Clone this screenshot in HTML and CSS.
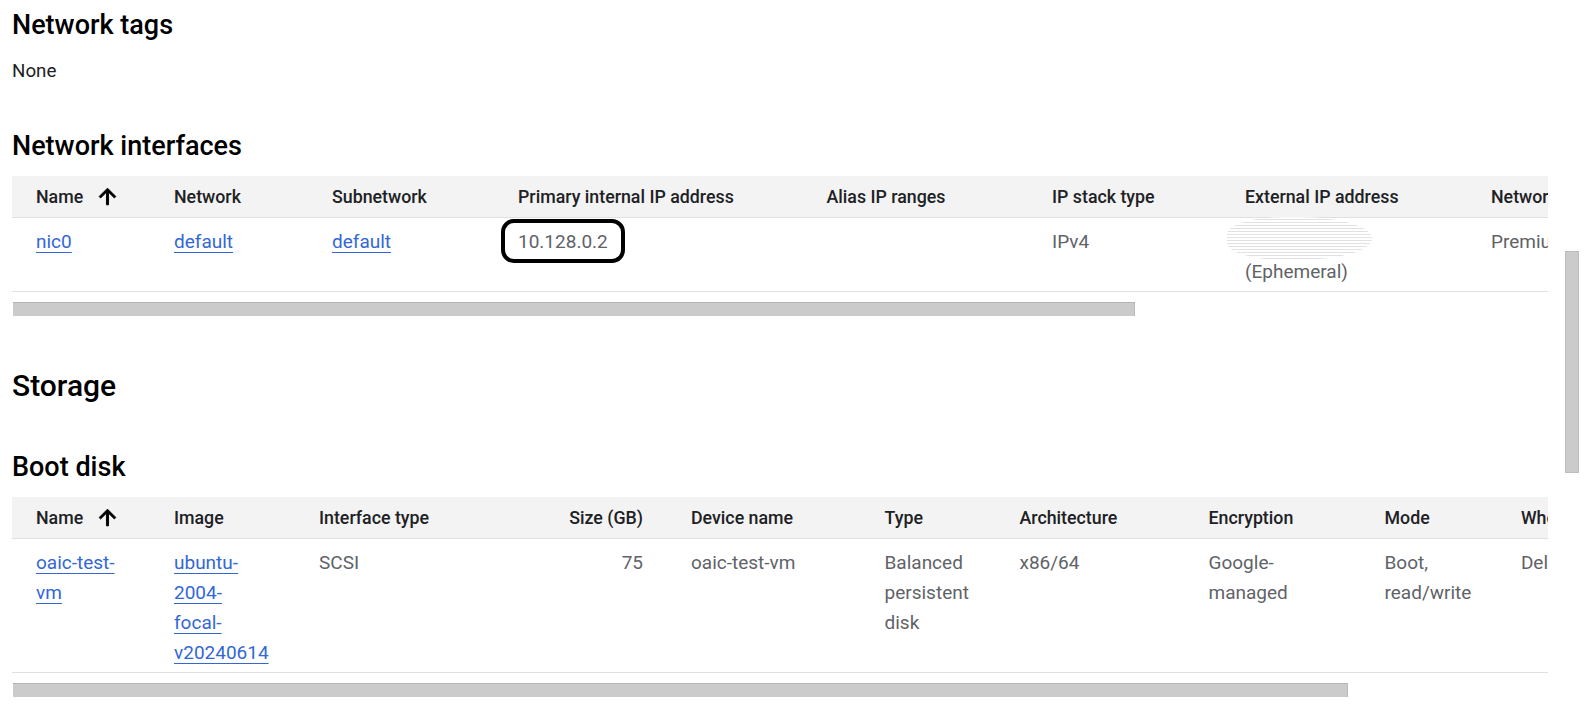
FILE: index.html
```html
<!DOCTYPE html>
<html lang="en">
<head>
<meta charset="utf-8">
<title>VM details</title>
<link rel="stylesheet" href="styles.css">
</head>
<body>
<main class="page">
  <h2 class="sub-title first">Network tags</h2>
  <p class="plain">None</p>

  <h2 class="sub-title gap-lg">Network interfaces</h2>
  <div class="table-wrap">
    <div class="table nic">
      <div class="row head">
        <div class="cell c1"><span>Name</span>
          <svg class="sort" viewBox="0 0 24 24"><path d="M4 12l1.41 1.41L11 7.83V20h2V7.83l5.58 5.59L20 12l-8-8-8 8z"/></svg>
        </div>
        <div class="cell">Network</div>
        <div class="cell">Subnetwork</div>
        <div class="cell">Primary internal IP address</div>
        <div class="cell">Alias IP ranges</div>
        <div class="cell">IP stack type</div>
        <div class="cell">External IP address</div>
        <div class="cell">Network tier</div>
      </div>
      <div class="row body">
        <div class="cell c1"><a href="#">nic0</a></div>
        <div class="cell"><a href="#">default</a></div>
        <div class="cell"><a href="#">default</a></div>
        <div class="cell"><span class="ip">10.128.0.2</span></div>
        <div class="cell"></div>
        <div class="cell">IPv4</div>
        <div class="cell"><div class="redact"></div>(Ephemeral)</div>
        <div class="cell">Premium</div>
      </div>
    </div>
  </div>
  <div class="hscroll"><div class="thumb t1"></div></div>

  <h2 class="title">Storage</h2>

  <h2 class="sub-title gap-md">Boot disk</h2>
  <div class="table-wrap">
    <div class="table disk">
      <div class="row head">
        <div class="cell c1"><span>Name</span>
          <svg class="sort" viewBox="0 0 24 24"><path d="M4 12l1.41 1.41L11 7.83V20h2V7.83l5.58 5.59L20 12l-8-8-8 8z"/></svg>
        </div>
        <div class="cell">Image</div>
        <div class="cell">Interface type</div>
        <div class="cell num">Size (GB)</div>
        <div class="cell">Device name</div>
        <div class="cell">Type</div>
        <div class="cell">Architecture</div>
        <div class="cell">Encryption</div>
        <div class="cell">Mode</div>
        <div class="cell">When deleting instance</div>
      </div>
      <div class="row body">
        <div class="cell c1"><a href="#">oaic-test-<br>vm</a></div>
        <div class="cell"><a href="#">ubuntu-<br>2004-<br>focal-<br>v20240614</a></div>
        <div class="cell">SCSI</div>
        <div class="cell num">75</div>
        <div class="cell">oaic-test-vm</div>
        <div class="cell">Balanced<br>persistent<br>disk</div>
        <div class="cell">x86/64</div>
        <div class="cell">Google-<br>managed</div>
        <div class="cell">Boot,<br>read/write</div>
        <div class="cell">Delete disk</div>
      </div>
    </div>
  </div>
  <div class="hscroll"><div class="thumb t2"></div></div>
</main>
<div class="vscroll"></div>
</body>
</html>
```

FILE: styles.css
```css
html, body {
  margin: 0;
  padding: 0;
  background: #ffffff;
  overflow: hidden;
}

body {
  font-family: Roboto, "Liberation Sans", Arial, sans-serif;
  color: #202124;
  width: 1594px;
  height: 705px;
  position: relative;
}

.page {
  padding: 9px 0 0 12px;
  width: 1536px;
}

.sub-title {
  margin: 0;
  font-size: 27px;
  line-height: 32px;
  font-weight: 500;
  color: #000000;
}

.title {
  margin: 52px 0 0 0;
  font-size: 30px;
  line-height: 36px;
  font-weight: 500;
  color: #000000;
}

.gap-lg { margin-top: 47px; }
.gap-md { margin-top: 47px; }

.plain {
  margin: 18px 0 0 0;
  font-size: 18.75px;
  line-height: 24px;
  color: #202124;
}

.table-wrap {
  margin-top: 14px;
  width: 1536px;
  overflow: hidden;
}

.table {
  width: 1800px;
}

.row {
  display: grid;
  border-bottom: 1px solid #e0e0e0;
}

.nic .row {
  grid-template-columns: 142px 158px 186px 308.5px 225.5px 193px 246px 240px;
}

.disk .row {
  grid-template-columns: 142px 145px 181px 191px 193.5px 135px 189px 176px 136.4px 260px;
}

.row.head {
  height: 41px;
  background: #f3f3f3;
  font-size: 17.8px;
  font-weight: 500;
  color: #202124;
  align-items: center;
}

.row.body {
  padding: 9px 0 4px 0;
  font-size: 19px;
  line-height: 30px;
  color: #5f6368;
  align-items: start;
}

.cell {
  padding: 0 20px;
  white-space: nowrap;
}

.cell.c1 {
  padding-left: 24px;
  display: flex;
  align-items: center;
}

.row.body .cell.c1 { display: block; }

.cell.num {
  text-align: right;
  padding-right: 28px;
}

.sort {
  width: 25px;
  height: 25px;
  margin-left: 12px;
  fill: #000000;
  stroke: #000000;
  stroke-width: 0.9;
  stroke-linejoin: miter;
}

a {
  color: #3367d6;
  text-decoration: underline;
  text-decoration-thickness: 1px;
  text-underline-offset: 4px;
}

.ip {
  position: relative;
  display: inline-block;
}

.ip::after {
  content: "";
  position: absolute;
  left: -17px;
  right: -17px;
  top: -8px;
  bottom: -6px;
  border: 4px solid #000000;
  border-radius: 13px;
}

.redact {
  position: relative;
  height: 30px;
}

.redact::before {
  content: "";
  position: absolute;
  left: -18px;
  width: 145px;
  top: -10px;
  bottom: -3px;
  border-radius: 40% 50% 50% 40%;
  background: repeating-linear-gradient(180deg, #ffffff 0px, #ffffff 2px, #dedede 2px, #dedede 3px);
  opacity: 0.9;
}

.hscroll {
  margin-top: 10px;
  height: 14px;
  width: 1536px;
}

.thumb {
  margin-left: 1px;
  background: #cbcbcb;
  border-top: 1px solid #b4b4b4;
  border-right: 1px solid #b9b9b9;
  box-sizing: border-box;
  height: 14px;
}

.t1 { width: 1122px; }
.t2 { width: 1335px; }

.vscroll {
  position: absolute;
  left: 1565px;
  top: 251px;
  width: 14px;
  height: 222px;
  background: #cbcbcb;
  border: 1px solid #bdbdbd;
  box-sizing: border-box;
}
```
